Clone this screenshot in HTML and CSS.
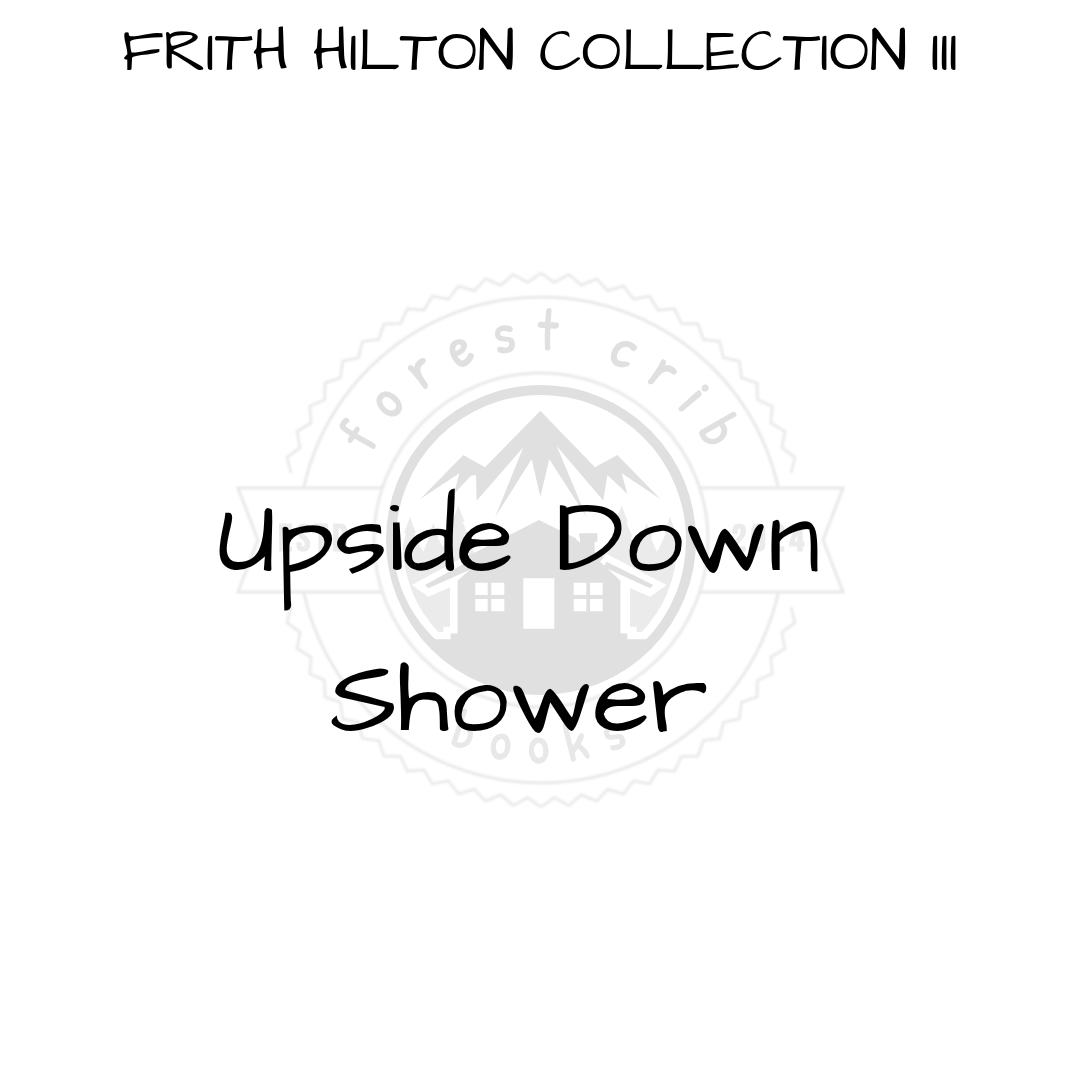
FILE: index.html
```html
<!DOCTYPE html>
<html lang="en">
<head>
<meta charset="utf-8">
<meta name="viewport" content="width=device-width, initial-scale=1">
<title>Frith Hilton Collection III</title>
<link rel="stylesheet" href="styles.css">
</head>
<body>
<main class="cover">
  <svg class="badge" viewBox="234 270 612 540" role="img" aria-label="Forest Crib Books, estd 2024">
    <defs>
      <path id="teeth" d="M0-267 13.5-257.6 27.9-265.5 40.4-254.8 55.5-261.2 66.8-249.2 82.5-253.9 92.5-240.9 108.6-243.9 117.1-229.9 133.5-231.2 140.5-216.4 156.9-216 162.4-200.5 178.7-198.4 182.4-182.4 198.4-178.7 200.5-162.4 216-156.9 216.4-140.5 231.2-133.5 229.9-117.1 243.9-108.6 240.9-92.5 253.9-82.5 250-67"/>
      <path id="arc-top" d="M351 540A190 190 0 0 1 731 540"/>
      <path id="arc-bottom" d="M318 540A223 223 0 0 0 764 540"/>
      <clipPath id="disc"><circle cx="541" cy="540" r="154"/></clipPath>
    </defs>
    <g class="thin edge" transform="translate(541 540)">
      <use href="#teeth"/>
      <use href="#teeth" transform="scale(-1 1)"/>
      <use href="#teeth" transform="scale(1 -1)"/>
      <use href="#teeth" transform="scale(-1 -1)"/>
    </g>
    <circle class="thin" cx="541" cy="540" r="243"/>
    <path class="thin ribbon" d="M385 488H238L258 540 238 592H385M697 488H843L823 540 843 592H697"/>
    <circle class="thin ribbon" cx="541" cy="540" r="167"/>
    <circle class="ring" cx="541" cy="540" r="150"/>
    <g clip-path="url(#disc)">
      <g transform="translate(370 370) scale(.33333)">
        <path class="dark" d="M511 122 675 292 742 255 872 388 755 310 772 372 712 315 700 392 560 228 650 442 538 268 511 380 485 268 375 442 460 232 320 392 318 315 302 318 252 372 268 310 150 388 280 255 345 292Z"/>
        <path class="light" id="wood" d="M120 440 138 490 132 490 150 530 160 545 178 500 172 500 190 460 208 500 202 500 218 530 240 500 232 500 252 455 246 455 265 408 284 455 278 455 296 500 288 500 320 560 240 640 240 770 220 770 220 786 205 786Q105 680 98 530L108 490 102 490Z"/>
        <use href="#wood" transform="translate(1020) scale(-1 1)"/>
        <path class="dark" d="M507 450 628 510V490H682V515H674V545L752 590V790H772V808H830L1000 700V1020H20V700L195 808H242V790H262V600L290 580V560Z"/>
        <path class="paper" d="M125 645 270 567 310 590 262 632V790H240V652L175 680ZM890 645 710 552 690 575 752 632V790H774V652L840 680ZM618 502V508L630 518V502Z"/>
        <path class="dark" d="M165 645 280 582 320 570 320 590 175 655ZM850 645 710 575 700 590 840 655Z"/>
        <path class="paper" d="M316 638h37v37h-37zM364 638h39v37h-39zM316 687h37v37h-37zM364 687h39v37h-39zM611 638h38v37h-38zM660 638h38v37h-38zM611 687h38v37h-38zM660 687h38v37h-38zM460 625h93v151h-93z"/>
        <path class="gap" d="M86 590Q110 710 200 798M930 590Q908 710 820 798"/>
      </g>
    </g>
    <text class="name"><textPath href="#arc-top" startOffset="51%">forest crib</textPath></text>
    <text class="name below"><textPath href="#arc-bottom" startOffset="51%">books</textPath></text>
    <text class="year" x="315" y="551">ESTD</text>
    <text class="year" x="770" y="551">2024</text>
  </svg>
  <h1 class="collection">FRITH HILTON COLLECTION III</h1>
  <h2 class="title">Upside Down<br>Shower</h2>
</main>
</body>
</html>
```
FILE: styles.css
```css
body {
  margin: 0;
  background: #fff;
  color: #000;
  font-family: "Architects Daughter", Lato, sans-serif;
}

.cover {
  display: grid;
  grid-template-columns: minmax(0, 1fr);
  min-height: 100vh;
  text-align: center;
}

.cover > * {
  grid-area: 1 / 1;
}

.badge {
  place-self: center;
  width: 612px;
  max-width: 100%;
}

.collection {
  align-self: start;
  margin: 0;
  padding-top: 18px;
  font-size: 60px;
  font-weight: 400;
  line-height: 70px;
}

.title {
  align-self: center;
  margin: 0;
  padding: 160px 42px 0 0;
  font-size: 105px;
  font-weight: 400;
  line-height: 160px;
}

.thin {
  fill: none;
  stroke: #e9e9e9;
  stroke-width: 3px;
  filter: blur(1px);
}

.edge {
  stroke: #ebebeb;
}

.ribbon {
  fill: #fff;
}

.ring {
  fill: #fff;
  stroke: #e0e0e0;
  stroke-width: 10px;
}

.dark {
  fill: #e0e0e0;
}

.light {
  fill: #ebebeb;
}

.paper {
  fill: #fff;
}

.gap {
  fill: none;
  stroke: #fff;
  stroke-width: 20px;
}

.name {
  fill: #e0e0e0;
  stroke: #e0e0e0;
  stroke-width: 1px;
  font-family: "Patrick Hand", "Architects Daughter", Lato, sans-serif;
  font-size: 58px;
  letter-spacing: 19px;
  text-anchor: middle;
}

.below {
  fill: #e8e8e8;
  stroke: #e8e8e8;
  font-size: 54px;
}

.year {
  fill: #ebebeb;
  font-family: "Bebas Neue", "Liberation Sans Narrow", "Liberation Sans", sans-serif;
  font-size: 38px;
  font-weight: 700;
  letter-spacing: 4px;
  text-anchor: middle;
}
```
